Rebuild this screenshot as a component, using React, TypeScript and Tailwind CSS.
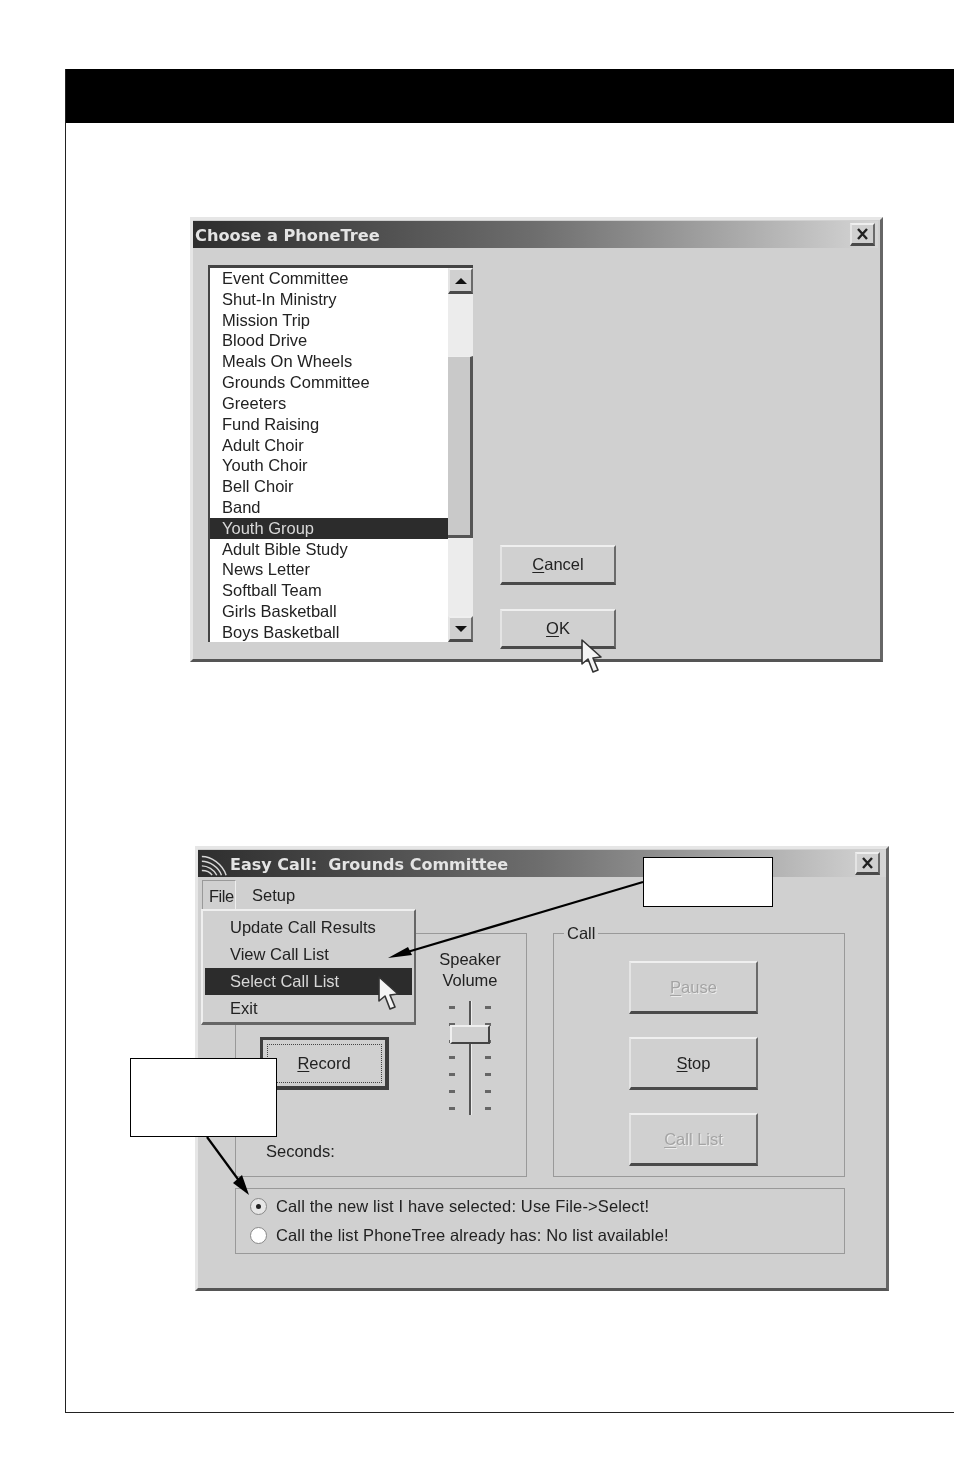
import React from 'react';

const raised =
  'border-t-2 border-l-2 border-r-2 border-b-[3px] border-t-[#efefef] border-l-[#e4e4e4] border-r-[#6a6a6a] border-b-[#4a4a4a]';

const phoneTrees = [
  'Event Committee',
  'Shut-In Ministry',
  'Mission Trip',
  'Blood Drive',
  'Meals On Wheels',
  'Grounds Committee',
  'Greeters',
  'Fund Raising',
  'Adult Choir',
  'Youth Choir',
  'Bell Choir',
  'Band',
  'Youth Group',
  'Adult Bible Study',
  'News Letter',
  'Softball Team',
  'Girls Basketball',
  'Boys Basketball',
];

const Cursor = ({ className }: { className: string }) => (
  <svg className={className} width="24" height="36" viewBox="0 0 24 36">
    <path
      d="M2 1 L2 25 L8 20 L13 33 L18 31 L13 19 L21 18 Z"
      fill="#f4f4f4"
      stroke="#333"
      strokeWidth="1.6"
      strokeLinejoin="round"
    />
  </svg>
);

const CloseButton = () => (
  <div className={`${raised} w-[25px] h-[23px] bg-[#d0d0d0] flex items-center justify-center`}>
    <svg width="13" height="12" viewBox="0 0 13 12">
      <path d="M2 1 L11 11 M11 1 L2 11" stroke="#222" strokeWidth="2.4" />
    </svg>
  </div>
);

const Key = ({ children }: { children: React.ReactNode }) => (
  <span className="underline underline-offset-2">{children}</span>
);

const ScrollArrow = ({ up }: { up?: boolean }) => (
  <div className={`${raised} h-[26px] bg-[#d0d0d0] flex items-center justify-center`}>
    <div
      className={`w-0 h-0 border-l-[6px] border-r-[6px] border-l-transparent border-r-transparent ${
        up ? 'border-b-[6px] border-b-[#111]' : 'border-t-[6px] border-t-[#111]'
      }`}
    />
  </div>
);

const ChooseDialog = () => (
  <div className="relative ml-[124px] mt-[94px] w-[693px] h-[445px] blur-[0.5px] bg-[#d0d0d0] border-t-[3px] border-l-[3px] border-r-[3px] border-b-[3px] border-t-[#e6e6e6] border-l-[#e6e6e6] border-r-[#666] border-b-[#555] flex flex-col">
    <div className="mt-[1px] h-[27px] mr-[2px] bg-gradient-to-r from-[#2e2e2e] via-[#6e6e6e] to-[#d6d6d6] flex items-center justify-between pr-[3px]">
      <span className="pl-[2px] pt-[3px] font-['DejaVu_Sans'] font-bold text-[16.2px] text-[#e4e4e4] whitespace-pre">
        Choose a PhoneTree
      </span>
      <CloseButton />
    </div>
    <div className="flex mt-[17px] ml-[15px]">
      <div className="w-[265px] h-[377px] border-t-[3px] border-l-[2px] border-t-[#444] border-l-[#444] bg-white flex">
        <ul className="w-[238px] overflow-hidden">
          {phoneTrees.map((name) => (
            <li
              key={name}
              className={`h-[20.82px] leading-[20px] pl-[12px] text-[16.5px] font-['Liberation_Sans'] whitespace-nowrap ${
                name === 'Youth Group' ? 'bg-[#2c2c2c] text-[#d8d8d8]' : 'text-[#222]'
              }`}
            >
              {name}
            </li>
          ))}
        </ul>
        <div className="w-[25px] flex flex-col bg-[#ececec]">
          <ScrollArrow up />
          <div className="h-[62px]" />
          <div className="h-[182px] bg-[#c9c9c9] border-t border-t-[#eee] border-r-[3px] border-r-[#555] border-b-[3px] border-b-[#555]" />
          <div className="flex-1" />
          <ScrollArrow />
        </div>
      </div>
      <div className="ml-[27px] pt-[280px] flex flex-col gap-[24px]">
        <button className={`${raised} w-[116px] h-[40px] bg-[#d0d0d0] text-[16.5px] text-[#222] font-['Liberation_Sans']`}>
          <Key>C</Key>ancel
        </button>
        <button className={`${raised} w-[116px] h-[40px] bg-[#d0d0d0] text-[16.5px] text-[#222] font-['Liberation_Sans']`}>
          <Key>O</Key>K
        </button>
      </div>
    </div>
    <Cursor className="absolute left-[387px] top-[419px]" />
  </div>
);

const CallButton = ({ label, rest, disabled }: { label: string; rest: string; disabled?: boolean }) => (
  <button
    className={`${raised} w-[129px] h-[53px] bg-[#d0d0d0] text-[16.5px] font-['Liberation_Sans'] ${
      disabled ? 'text-[#a4a4a4] [text-shadow:1px_1px_0_#ececec]' : 'text-[#222]'
    }`}
  >
    <Key>{label}</Key>
    {rest}
  </button>
);

const Ticks = () => (
  <div className="flex flex-col justify-between h-[104px]">
    {[0, 1, 2, 3, 4, 5, 6].map((i) => (
      <div key={i} className="w-[6px] h-[3px] bg-[#666]" />
    ))}
  </div>
);

const EasyCallDialog = () => (
  <div className="relative ml-[129px] mt-[184px] w-[694px] h-[445px] blur-[0.5px] bg-[#d0d0d0] border-t-[3px] border-l-[3px] border-r-[3px] border-b-[3px] border-t-[#e6e6e6] border-l-[#e6e6e6] border-r-[#666] border-b-[#555] flex flex-col font-['Liberation_Sans'] text-[#222] text-[16.5px]">
    <div className="mt-[1px] h-[27px] bg-gradient-to-r from-[#2e2e2e] via-[#6e6e6e] to-[#d6d6d6] flex items-center justify-between pr-[6px] pl-[2px]">
      <div className="flex items-center">
        <svg width="28" height="26" viewBox="0 0 30 26" fill="none" stroke="#d8d8d8" strokeWidth="1.5">
          <path d="M2 5 C12 5 24 13 28 25" />
          <path d="M2 10 C10 10 20 16 23 25" />
          <path d="M2 15 C8 15 15 19 18 25" />
          <path d="M2 20 C6 20 11 22 13 25" />
        </svg>
        <span className="ml-[2px] pt-[3px] font-['DejaVu_Sans'] font-bold text-[16px] text-[#e4e4e4] whitespace-pre">
          Easy Call:  Grounds Committee
        </span>
      </div>
      <CloseButton />
    </div>
    <div className="h-[33px] flex items-end pl-[4px]">
      <span className="w-[34px] h-[30px] pl-[6px] tracking-[-0.5px] border-l border-t border-r border-l-[#999] border-t-[#999] border-r-[#eee] leading-[30px]">
        File
      </span>
      <span className="ml-[16px] h-[30px] leading-[30px]">Setup</span>
    </div>
    <div className="flex ml-[37px] mt-[23px] gap-[26px]">
      <div className="relative w-[292px] h-[244px] border border-[#999] flex">
        <div className="w-[198px] pl-[24px] pt-[103px]">
          <div className="w-[129px] h-[53px] border-[3px] border-[#3e3e3e] border-r-[4px] border-b-[4px] flex items-center justify-center">
            <div className="w-[115px] h-[39px] border border-dotted border-[#444] flex items-center justify-center">
              <span>
                <Key>R</Key>ecord
              </span>
            </div>
          </div>
          <div className="pt-[51px] pl-[6px] leading-[20px]">Seconds:</div>
        </div>
        <div className="w-[72px] pt-[15px] flex flex-col items-center">
          <div className="text-center leading-[21px]">
            Speaker
            <br />
            Volume
          </div>
          <div className="relative mt-[9px] w-[46px] h-[116px] flex justify-between items-center px-[2px]">
            <Ticks />
            <div className="w-[3px] h-[114px] bg-[#555] border-r border-r-[#eee]" />
            <Ticks />
            <div className="absolute left-[3px] top-[25px] w-[40px] h-[19px] bg-[#d0d0d0] border-t-2 border-l-2 border-r-2 border-b-2 border-t-[#efefef] border-l-[#efefef] border-r-[#444] border-b-[#444]" />
          </div>
        </div>
      </div>
      <div className="relative w-[292px] h-[244px] border border-[#999] flex flex-col items-start gap-[23px] pt-[27px] pl-[75px]">
        <span className="absolute left-[10px] -top-[11px] px-[3px] bg-[#d0d0d0] leading-[20px]">Call</span>
        <CallButton label="P" rest="ause" disabled />
        <CallButton label="S" rest="top" />
        <CallButton label="C" rest="all List" disabled />
      </div>
    </div>
    <div className="ml-[37px] mt-[11px] w-[610px] h-[66px] border border-[#999] pl-[14px] pt-[7px] flex flex-col gap-[9px]">
      <div className="flex items-center h-[20px]">
        <div className="w-[17px] h-[17px] rounded-full bg-[#e6e6e6] border border-[#888] flex items-center justify-center">
          <div className="w-[5px] h-[5px] rounded-full bg-[#222]" />
        </div>
        <span className="ml-[9px] tracking-[0.13px]">Call the new list I have selected: Use File-&gt;Select!</span>
      </div>
      <div className="flex items-center h-[20px]">
        <div className="w-[17px] h-[17px] rounded-full bg-white border border-[#888]" />
        <span className="ml-[9px] tracking-[0.13px]">Call the list PhoneTree already has: No list available!</span>
      </div>
    </div>

    <div className="absolute left-[3px] top-[60px] w-[215px] h-[116px] bg-[#d0d0d0] border-t-2 border-l-2 border-r-2 border-b-[3px] border-t-[#efefef] border-l-[#efefef] border-r-[#666] border-b-[#666] pt-[3px] px-[2px]">
      {['Update Call Results', 'View Call List', 'Select Call List', 'Exit'].map((item) => (
        <div
          key={item}
          className={`h-[27px] leading-[27px] pl-[25px] whitespace-nowrap ${
            item === 'Select Call List' ? 'bg-[#2c2c2c] text-[#d8d8d8]' : ''
          }`}
        >
          {item}
        </div>
      ))}
    </div>
    <Cursor className="absolute left-[179px] top-[127px]" />
  </div>
);

export default function App() {
  return (
    <div className="relative w-[954px] h-[1474px] overflow-hidden bg-white pt-[69px] pl-[65px]">
      <div className="h-[1344px] border-l border-b border-[#222] flex flex-col">
        <div className="h-[54px] shrink-0 bg-black" />
        <ChooseDialog />
        <EasyCallDialog />
      </div>

      <svg className="absolute left-0 top-0" width="954" height="1474">
        <path d="M643 882 L404 953" stroke="#000" strokeWidth="2.2" />
        <path d="M388 958 L408 947 L412 955 Z" fill="#000" />
        <path d="M207 1137 L240 1182" stroke="#000" strokeWidth="2.2" />
        <path d="M249 1195 L233 1183 L242 1175 Z" fill="#000" />
      </svg>
      <div className="absolute left-[643px] top-[857px] w-[130px] h-[50px] bg-white border border-black" />
      <div className="absolute left-[130px] top-[1058px] w-[147px] h-[79px] bg-white border border-black" />
    </div>
  );
}
